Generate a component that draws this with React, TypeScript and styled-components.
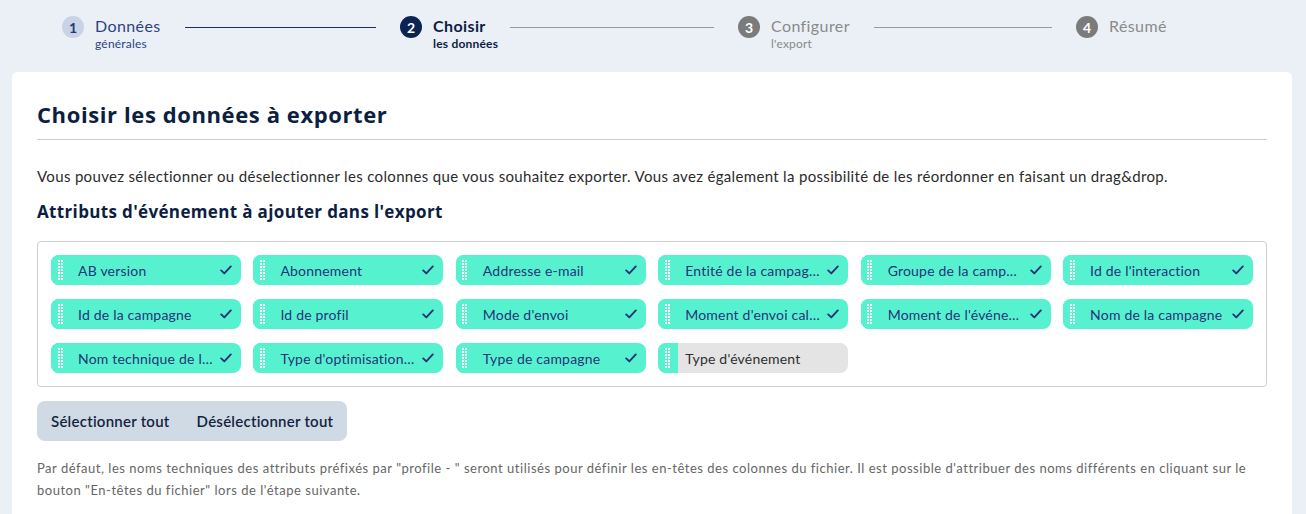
import React from "react";
import styled, { createGlobalStyle } from "styled-components";

const Global = createGlobalStyle`
  html, body { margin: 0; padding: 0; }
  body {
    background: #ebf0f7;
    font-family: Lato, "Open Sans", sans-serif;
    overflow: hidden;
  }
`;

const Page = styled.div`
  width: 1306px;
  height: 514px;
  display: flex;
  flex-direction: column;
  overflow: hidden;
`;

const Stepper = styled.div`
  display: grid;
  grid-template-columns: repeat(3, 338px) auto;
  padding: 16px 0 0 62px;
  height: 72px;
  box-sizing: border-box;
`;

const StepCol = styled.div`
  display: flex;
  align-items: flex-start;
`;

type StepState = "done" | "active" | "todo";

const Circle = styled.div<{ $state: StepState }>`
  width: 22px;
  height: 22px;
  border-radius: 50%;
  flex: none;
  display: flex;
  align-items: center;
  justify-content: center;
  font-size: 14px;
  font-weight: 700;
  background: ${(p) =>
    p.$state === "done" ? "#cad2e5" : p.$state === "active" ? "#0c2453" : "#7b7b7b"};
  color: ${(p) => (p.$state === "done" ? "#1f3a74" : "#ffffff")};
`;

const StepText = styled.div<{ $state: StepState }>`
  margin-left: 11px;
  display: flex;
  flex-direction: column;
  color: ${(p) =>
    p.$state === "done" ? "#2a4384" : p.$state === "active" ? "#0c1e42" : "#8a8a8a"};
`;

const StepTitle = styled.div<{ $state: StepState }>`
  font-size: 16px;
  line-height: 20px;
  white-space: nowrap;
  letter-spacing: 0.4px;
  font-weight: ${(p) => (p.$state === "active" ? 700 : 400)};
`;

const StepSub = styled.div<{ $state: StepState }>`
  width: 0;
  white-space: nowrap;
  font-size: 12px;
  line-height: 16px;
  letter-spacing: 0.2px;
  font-weight: ${(p) => (p.$state === "active" ? 700 : 400)};
`;

const StepLine = styled.div<{ $done: boolean }>`
  flex: 1;
  height: 1px;
  margin: 11px 24px 0 24px;
  background: ${(p) => (p.$done ? "#1a2f5e" : "#9a9a9a")};
`;

const Card = styled.div`
  flex: 1;
  margin: 0 14px 0 12px;
  background: #ffffff;
  border-radius: 5px 5px 0 0;
  padding: 27px 25px 0 25px;
  box-sizing: border-box;
`;

const Title = styled.h1`
  margin: 0;
  font-family: "Open Sans", sans-serif;
  font-weight: 700;
  font-size: 22px;
  line-height: 30px;
  color: #0c1e42;
  letter-spacing: 0.6px;
`;

const Rule = styled.hr`
  border: none;
  border-top: 1px solid #cccccc;
  margin: 10px 0 0 0;
`;

const Intro = styled.p`
  margin: 25px 0 0 0;
  font-size: 15px;
  line-height: 22px;
  color: #2b2b2b;
  letter-spacing: 0.33px;
`;

const SubTitle = styled.h2`
  margin: 13px 0 0 0;
  font-family: "Open Sans", sans-serif;
  font-weight: 700;
  font-size: 17px;
  line-height: 24px;
  color: #0c1e42;
  letter-spacing: 0.35px;
`;

const ChipBox = styled.div`
  margin-top: 17px;
  border: 1px solid #cfcfcf;
  border-radius: 4px;
  padding: 13px;
  display: grid;
  grid-template-columns: repeat(6, 1fr);
  column-gap: 12.5px;
  row-gap: 14px;
`;

const Chip = styled.div<{ $on: boolean }>`
  height: 30px;
  border-radius: 8px;
  display: flex;
  align-items: center;
  overflow: hidden;
  background: ${(p) => (p.$on ? "#56f2d0" : "#e4e4e4")};
`;

const Handle = styled.div`
  width: 20px;
  align-self: stretch;
  flex: none;
  background: #56f2d0;
  display: flex;
  align-items: center;
  justify-content: center;
  padding-right: 2px;
  box-sizing: border-box;
`;

const ChipLabel = styled.div<{ $on: boolean }>`
  flex: 1;
  min-width: 0;
  padding-left: 7px;
  font-size: 14px;
  letter-spacing: 0.2px;
  white-space: nowrap;
  overflow: hidden;
  text-overflow: ellipsis;
  color: ${(p) => (p.$on ? "#253477" : "#2e2e2e")};
`;

const CheckWrap = styled.div`
  width: 26px;
  flex: none;
  display: flex;
  align-items: center;
  justify-content: center;
  padding-right: 2px;
`;

const ButtonGroup = styled.div`
  margin-top: 14px;
  display: inline-flex;
  background: #cfdae4;
  border-radius: 8px;
  height: 40px;
  align-items: center;
  padding: 0 14px;
  gap: 27px;
`;

const GroupButton = styled.button`
  border: none;
  background: transparent;
  padding: 0;
  font-family: Lato, sans-serif;
  font-size: 15px;
  font-weight: 600;
  letter-spacing: 0.25px;
  color: #142440;
  cursor: pointer;
`;

const Note = styled.p`
  margin: 16px 0 0 0;
  font-size: 13px;
  line-height: 22px;
  letter-spacing: 0.52px;
  color: #666666;
`;

const HandleIcon = () => (
  <svg width="5" height="20" viewBox="0 0 5 20">
    {Array.from({ length: 7 }).map((_, r) => (
      <React.Fragment key={r}>
        <rect x="0" y={r * 3} width="2" height="2" fill="#fff" />
        <rect x="3" y={r * 3} width="2" height="2" fill="#fff" />
      </React.Fragment>
    ))}
  </svg>
);

const CheckIcon = () => (
  <svg width="12" height="10" viewBox="0 0 12 10">
    <path d="M1.2 5.4 L4.3 8.4 L10.8 1.4" fill="none" stroke="#253477" strokeWidth="1.9" strokeLinecap="round" strokeLinejoin="round" />
  </svg>
);

const steps: { n: number; title: string; sub?: string; state: StepState }[] = [
  { n: 1, title: "Données", sub: "générales", state: "done" },
  { n: 2, title: "Choisir", sub: "les données", state: "active" },
  { n: 3, title: "Configurer", sub: "l'export", state: "todo" },
  { n: 4, title: "Résumé", state: "todo" },
];

const chips: { label: string; on: boolean }[] = [
  { label: "AB version", on: true },
  { label: "Abonnement", on: true },
  { label: "Addresse e-mail", on: true },
  { label: "Entité de la campagne", on: true },
  { label: "Groupe de la campagne", on: true },
  { label: "Id de l'interaction", on: true },
  { label: "Id de la campagne", on: true },
  { label: "Id de profil", on: true },
  { label: "Mode d'envoi", on: true },
  { label: "Moment d'envoi calculé", on: true },
  { label: "Moment de l'événement", on: true },
  { label: "Nom de la campagne", on: true },
  { label: "Nom technique de la campagne", on: true },
  { label: "Type d'optimisation de l'envoi", on: true },
  { label: "Type de campagne", on: true },
  { label: "Type d'événement", on: false },
];

export default function App() {
  return (
    <Page>
      <Global />
      <Stepper>
        {steps.map((s, i) => (
          <StepCol key={s.n}>
            <Circle $state={s.state}>{s.n}</Circle>
            <StepText $state={s.state}>
              <StepTitle $state={s.state}>{s.title}</StepTitle>
              {s.sub && <StepSub $state={s.state}>{s.sub}</StepSub>}
            </StepText>
            {i < steps.length - 1 && <StepLine $done={s.state === "done"} />}
          </StepCol>
        ))}
      </Stepper>
      <Card>
        <Title>Choisir les données à exporter</Title>
        <Rule />
        <Intro>
          Vous pouvez sélectionner ou déselectionner les colonnes que vous souhaitez exporter. Vous avez également la possibilité de les réordonner en faisant un drag&amp;drop.
        </Intro>
        <SubTitle>Attributs d'événement à ajouter dans l'export</SubTitle>
        <ChipBox>
          {chips.map((c) => (
            <Chip key={c.label} $on={c.on}>
              <Handle>
                <HandleIcon />
              </Handle>
              <ChipLabel $on={c.on}>{c.label}</ChipLabel>
              {c.on ? (
                <CheckWrap>
                  <CheckIcon />
                </CheckWrap>
              ) : (
                <CheckWrap />
              )}
            </Chip>
          ))}
        </ChipBox>
        <ButtonGroup>
          <GroupButton>Sélectionner tout</GroupButton>
          <GroupButton>Désélectionner tout</GroupButton>
        </ButtonGroup>
        <Note>
          Par défaut, les noms techniques des attributs préfixés par "profile - " seront utilisés pour définir les en-têtes des colonnes du fichier. Il est possible d'attribuer des noms différents en cliquant sur le bouton "En-têtes du fichier" lors de l'étape suivante.
        </Note>
      </Card>
    </Page>
  );
}
